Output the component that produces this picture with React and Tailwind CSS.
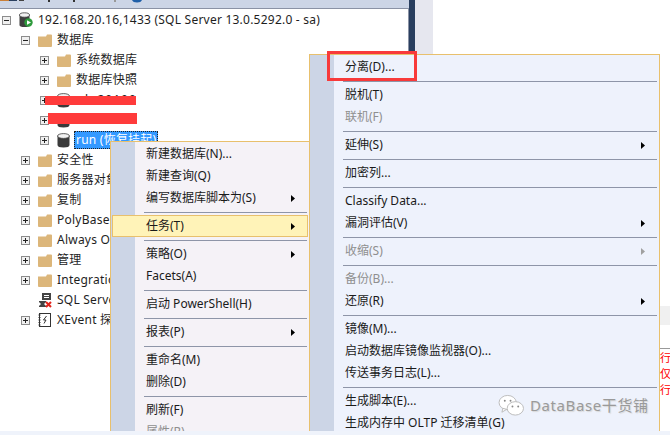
import React from "react";

const FONT = "[font-family:'Noto_Sans','Noto_Sans_CJK_SC',sans-serif]";

function Folder() {
  return (
    <svg width="14" height="13" viewBox="0 0 14 13" className="shrink-0">
      <path d="M0 2.5 H8 L9 0.5 H13 Q14 0.5 14 1.5 V12 Q14 13 13 13 H1 Q0 13 0 12 Z" fill="#dcb67a" />
    </svg>
  );
}

function Box({ kind }) {
  return (
    <span className="w-[9px] h-[9px] shrink-0 border border-[#8c8c8c] bg-[#f0f0f0] relative block">
      <span className="absolute left-[1px] right-[1px] top-[3px] h-px bg-[#222]" />
      {kind === "plus" && <span className="absolute top-[1px] bottom-[1px] left-[3px] w-px bg-[#222]" />}
    </span>
  );
}

function Db() {
  return (
    <svg width="13" height="15" viewBox="0 0 13 15" className="shrink-0">
      <path d="M0.5 3 V12 Q0.5 14.5 6.5 14.5 Q12.5 14.5 12.5 12 V3 Z" fill="#3a3a3a" />
      <ellipse cx="6.5" cy="3" rx="6" ry="2.4" fill="#f2f2f2" stroke="#3a3a3a" strokeWidth="0.8" />
    </svg>
  );
}

function ServerIcon() {
  return (
    <svg width="14" height="16" viewBox="0 0 14 16" className="shrink-0">
      <path d="M0.5 3 V13 Q0.5 15 5.5 15 Q10.5 15 10.5 13 V3 Z" fill="#3f3f3f" />
      <ellipse cx="5.5" cy="3" rx="5" ry="2.2" fill="#f2f2f2" stroke="#3f3f3f" strokeWidth="0.8" />
      <circle cx="9.5" cy="10.5" r="4.2" fill="#2e9a3c" />
      <path d="M8 8.3 L12 10.5 L8 12.7 Z" fill="#fff" />
    </svg>
  );
}

function AgentIcon() {
  return (
    <svg width="14" height="15" viewBox="0 0 14 15" className="shrink-0">
      <rect x="4" y="0" width="9" height="7" fill="#444" />
      <rect x="6" y="2" width="5" height="1" fill="#fff" />
      <rect x="6" y="4" width="5" height="1" fill="#fff" />
      <path d="M1 8 H8 V9 L6 11 L8 13 V14 H1 V13 L3 11 L1 9 Z" fill="#444" />
      <path d="M8 9 L13 14 M13 9 L8 14" stroke="#e2231a" strokeWidth="2" />
    </svg>
  );
}

function XEventIcon() {
  return (
    <svg width="13" height="14" viewBox="0 0 13 14" className="shrink-0">
      <rect x="1.5" y="0.5" width="11" height="13" fill="#fff" stroke="#333" />
      <path d="M0.5 2 H2.5 M0.5 4.5 H2.5 M0.5 7 H2.5 M0.5 9.5 H2.5 M0.5 12 H2.5" stroke="#333" />
      <path d="M8.5 3 L5.5 7 H8 L6 10.5" fill="none" stroke="#333" />
    </svg>
  );
}

function Row({ indent, box, icon, children, selected }) {
  return (
    <div className="h-5 flex items-center" style={{ paddingLeft: indent }}>
      <span className="w-[17px] shrink-0">{box && <Box kind={box} />}</span>
      <span className="w-[19px] shrink-0 flex items-center">{icon}</span>
      {selected ? (
        <span className="h-[18px] -ml-[2px] pl-[2px] pr-[2px] leading-[17px] bg-[#3399ff] text-white outline-1 outline-dotted -outline-offset-1 outline-[#222] whitespace-nowrap tracking-[0.23px]">
          {children}
        </span>
      ) : (
        <span className="whitespace-nowrap tracking-[0.23px]">{children}</span>
      )}
    </div>
  );
}

const tree = [
  { indent: 2, box: "minus", icon: <ServerIcon />, text: "192.168.20.16,1433 (SQL Server 13.0.5292.0 - sa)" },
  { indent: 21, box: "minus", icon: <Folder />, text: "数据库" },
  { indent: 40, box: "plus", icon: <Folder />, text: "系统数据库" },
  { indent: 40, box: "plus", icon: <Folder />, text: "数据库快照" },
  { indent: 40, box: "plus", icon: <Db />, text: <span className="ml-[9px] tracking-[1px]">b 20190</span> },
  { indent: 40, box: "plus", icon: <Db />, text: "" },
  { indent: 40, box: "plus", icon: <Db />, text: "run (恢复挂起)", selected: true },
  { indent: 21, box: "plus", icon: <Folder />, text: "安全性" },
  { indent: 21, box: "plus", icon: <Folder />, text: "服务器对象" },
  { indent: 21, box: "plus", icon: <Folder />, text: "复制" },
  { indent: 21, box: "plus", icon: <Folder />, text: "PolyBase" },
  { indent: 21, box: "plus", icon: <Folder />, text: "Always On 高可用性" },
  { indent: 21, box: "plus", icon: <Folder />, text: "管理" },
  { indent: 21, box: "plus", icon: <Folder />, text: "Integration Services 目录" },
  { indent: 21, icon: <AgentIcon />, text: "SQL Server 代理" },
  { indent: 21, box: "plus", icon: <XEventIcon />, text: "XEvent 探查器" },
];

function Arrow({ off }) {
  return (
    <svg width="4" height="7" viewBox="0 0 4 7" className="absolute right-[13px] top-[8px]">
      <path d="M0 0 L4 3.5 L0 7 Z" fill={off ? "#a0a0a0" : "#000"} />
    </svg>
  );
}

function Item({ label, arrow, off, hot, left }) {
  return (
    <div
      className={
        "h-[22px] relative leading-[21px] whitespace-nowrap " +
        (off ? "text-[#8f8f8f] " : "text-[#1a1a1a] ") +
        (hot ? "bg-[#fff3b8] outline outline-1 outline-[#e8c06d] -outline-offset-1" : "")
      }
      style={{ paddingLeft: left }}
    >
      {label}
      {arrow && <Arrow off={off} />}
    </div>
  );
}

function Sep({ left }) {
  return (
    <div className="h-[6px] flex items-center pr-[1px]" style={{ paddingLeft: left }}>
      <div className="h-px w-full bg-[#8e95a8]" />
    </div>
  );
}

function Menu({ className, items, left, sepLeft, gutter, bg }) {
  return (
    <div className={"absolute border border-[#e8c06d] " + className} style={{ background: bg }}>
      <div className="absolute left-0 top-0 bottom-0 bg-[#ccd5e6]" style={{ width: gutter }} />
      <div className="relative pt-[1px] pl-[1px] pr-[1px]">
        {items.map((it, i) =>
          it === "-" ? <Sep key={i} left={sepLeft} /> : <Item key={i} {...it} left={left} />
        )}
      </div>
    </div>
  );
}

const menu1 = [
  { label: "新建数据库(N)..." },
  { label: "新建查询(Q)" },
  { label: "编写数据库脚本为(S)", arrow: true },
  "-",
  { label: "任务(T)", arrow: true, hot: true },
  "-",
  { label: "策略(O)", arrow: true },
  { label: "Facets(A)" },
  "-",
  { label: "启动 PowerShell(H)" },
  "-",
  { label: "报表(P)", arrow: true },
  "-",
  { label: "重命名(M)" },
  { label: "删除(D)" },
  "-",
  { label: "刷新(F)" },
  { label: "属性(R)", off: true },
];

const menu2 = [
  { label: "分离(D)..." },
  "-",
  { label: "脱机(T)" },
  { label: "联机(F)", off: true },
  "-",
  { label: "延伸(S)", arrow: true },
  "-",
  { label: "加密列..." },
  "-",
  { label: "Classify Data..." },
  { label: "漏洞评估(V)", arrow: true },
  "-",
  { label: "收缩(S)", arrow: true, off: true },
  "-",
  { label: "备份(B)...", off: true },
  { label: "还原(R)", arrow: true },
  "-",
  { label: "镜像(M)..." },
  { label: "启动数据库镜像监视器(O)..." },
  { label: "传送事务日志(L)..." },
  "-",
  { label: "生成脚本(E)..." },
  { label: "生成内存中 OLTP 迁移清单(G)" },
];

export default function App() {
  return (
    <div className={"relative w-[670px] h-[435px] overflow-hidden bg-white text-[12px] text-[#1e1e1e] flex " + FONT}>
      {/* Object explorer */}
      <div className="w-[409px] h-full flex flex-col shrink-0">
        <div className="h-[9px] bg-[#ccd5e6] border-b border-[#8a92a5] shrink-0 overflow-hidden">
          <svg width="170" height="4" viewBox="0 0 170 4" className="block">
            <rect x="0" y="0" width="9" height="1" fill="#c9803a" />
            <rect x="9" y="0" width="8" height="1" fill="#2a3f5f" />
            <rect x="19" y="0" width="5" height="1" fill="#444" />
            <rect x="48" y="0" width="2" height="2" fill="#333" />
            <rect x="73" y="0" width="2" height="2" fill="#333" />
            <rect x="114" y="0" width="2" height="2" fill="#999" />
            <path d="M132 0 H142 Q141 2.5 137 2.5 Q133 2.5 132 0 Z" fill="#1f5fa8" />
          </svg>
        </div>
        <div className="flex-1 bg-white border-r border-[#8a92a5] pt-[1px]">
          {tree.map((r, i) => (
            <Row key={i} indent={r.indent} box={r.box} icon={r.icon} selected={r.selected}>
              {r.text}
            </Row>
          ))}
        </div>
      </div>
      <div className="w-[6px] h-full bg-[#2a3f5f] shrink-0" />
      <div className="w-[18px] h-full bg-[#e6e7ef] shrink-0" />
      {/* Right document */}
      <div className="flex-1 h-full bg-white flex flex-col items-end pt-[306px]">
        <div className="w-[11px] h-[19px] bg-[#f0f0f0]" />
        <div className="w-[11px] h-px bg-[#999] mt-[23px]" />
        <div className="w-[11px] pl-[1px] text-[#ff0000] text-[11px] leading-[16px] overflow-hidden whitespace-nowrap pt-[1px]">
          <div>行</div>
          <div>仅</div>
          <div>行</div>
        </div>
      </div>

      {/* Context menus */}
      <Menu className="left-[110px] top-[141px] w-[200px] h-[300px]" items={menu1} left={34} sepLeft={32} gutter={24} bg="#f5f2f7" />
      <Menu className="left-[309px] top-[54px] w-[351px] h-[390px]" items={menu2} left={34} sepLeft={32} gutter={24} bg="#eef2fc" />

      {/* Annotations */}
      <div className="absolute left-[45px] top-[96px] w-[91px] h-[9px] bg-[#ff3b3b]" />
      <div className="absolute left-[48px] top-[113px] w-[89px] h-[11px] bg-[#ff3b3b]" />
      <div className="absolute left-[327px] top-[51px] w-[90px] h-[30px] border-[3px] border-[#f83a3a]" />

      {/* Watermark */}
      <div className="absolute left-[498px] top-[394px] flex items-center gap-[5px]">
        <svg width="27" height="23" viewBox="0 0 28 24">
          <ellipse cx="10" cy="9" rx="9" ry="7.5" fill="#fff" stroke="#bbb" />
          <path d="M5 15 L4 19 L9 16 Z" fill="#fff" stroke="#bbb" />
          <ellipse cx="18" cy="15" rx="8.5" ry="7" fill="#fff" stroke="#bbb" />
          <circle cx="7" cy="7" r="1" fill="#888" />
          <circle cx="13" cy="7" r="1" fill="#888" />
          <circle cx="15" cy="13" r="1" fill="#888" />
          <circle cx="21" cy="13" r="1" fill="#888" />
        </svg>
        <span className="text-[15px] text-[#9a9a9a] tracking-[0.6px] [text-shadow:1px_1px_1px_#d8d8d8] whitespace-nowrap">DataBase干货铺</span>
      </div>

      <div className="absolute left-0 right-0 bottom-0 h-[4px] bg-[#eff3fb]" />
    </div>
  );
}
